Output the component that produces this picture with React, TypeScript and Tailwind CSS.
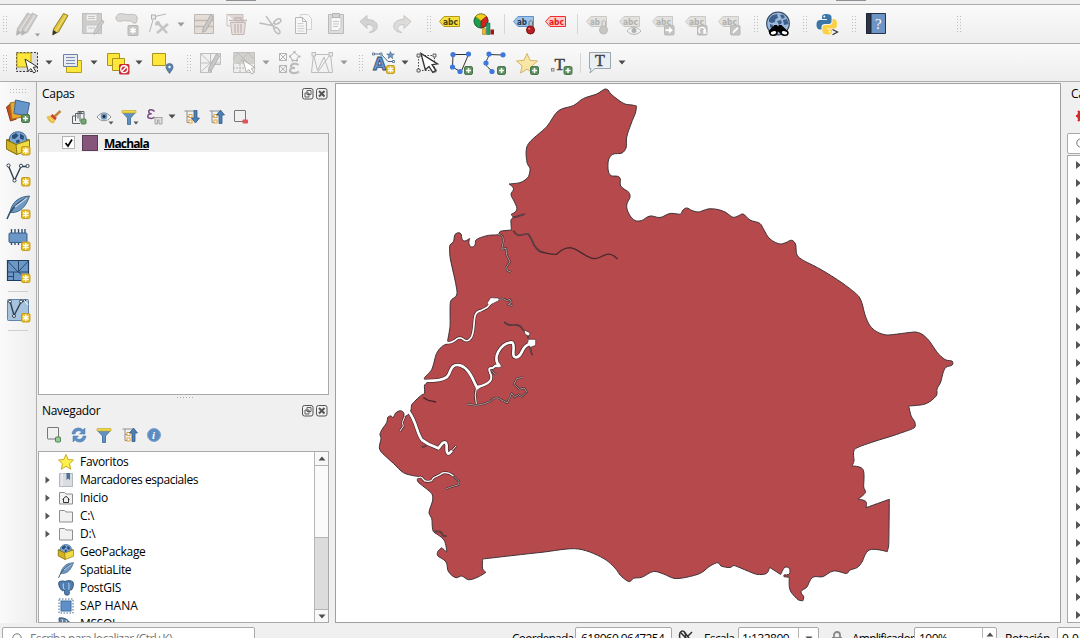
import React from "react";

type P = { className?: string; children?: React.ReactNode };

/* ---------- toolbar primitives ---------- */

const Ico = ({ className = "", children }: P) => (
  <svg viewBox="0 0 24 24" className={"h-6 w-6 shrink-0 overflow-visible " + className} fill="none">
    {children}
  </svg>
);

const Grip = ({ className = "" }: P) => (
  <svg viewBox="0 0 6 18" className={"h-[18px] w-[6px] shrink-0 " + className}>
    {[0, 3, 6, 9, 12, 15].map((y) => (
      <g key={y} fill="#bdbdbd">
        <rect x="1" y={y + 1} width="1" height="1" />
        <rect x="4" y={y + 1} width="1" height="1" />
      </g>
    ))}
  </svg>
);

const Sep = ({ className = "" }: P) => <div className={"h-5 w-[2px] shrink-0 border-l border-[#d6d6d6] " + className} />;

const Drop = ({ className = "", dim = false }: P & { dim?: boolean }) => (
  <svg viewBox="0 0 8 5" className={"h-[5px] w-2 shrink-0 " + className}>
    <path d="M.5 .5h7L4 4.5z" fill={dim ? "#9a9a9a" : "#4d4d4d"} />
  </svg>
);

/* ---------- shared glyph parts ---------- */

const NewBadge = ({ x, y, s = 1 }: { x: number; y: number; s?: number }) => (
  <g transform={`translate(${x} ${y}) scale(${s})`}>
    <rect x=".5" y=".5" width="8.5" height="8.5" rx="1.5" fill="#e5bd2c" stroke="#c39d22" />
    <path d="M4.75 1.5v6.5M2 3.2l5.500 3.200M7.500 3.2L2 6.4" stroke="#fff" strokeWidth="1.400" />
  </g>
);

const PlusBadge = ({ x, y, s = 1 }: { x: number; y: number; s?: number }) => (
  <g transform={`translate(${x} ${y}) scale(${s})`}>
    <rect x=".5" y=".5" width="8" height="8" rx="1.5" fill="#5f9160" stroke="#4a774a" />
    <path d="M4.5 2v5M2 4.5h5" stroke="#fff" strokeWidth="1.5" />
  </g>
);

const Cursor = ({ x, y, stroke = "#333", s = 1 }: { x: number; y: number; stroke?: string; s?: number }) => (
  <path
    transform={`translate(${x} ${y}) scale(${s})`}
    d="M0 0l3.2 12 2.7-2.4 2.8 4.4 2.2-1.4L8.2 8.3l4-.6z"
    fill="#fff"
    stroke={stroke}
    strokeWidth="1"
  />
);

const Tag = ({ fill, stroke, color, text = "abc" }: { fill: string; stroke: string; color: string; text?: string }) => (
  <g>
    <path d="M1.5 9.500L6 4.500h15.500v10H6z" fill={fill} stroke={stroke} strokeLinejoin="round" />
    <text x="5" y="12.600" fontSize="9" fontWeight="700" fontFamily="'DejaVu Sans', sans-serif" fill={color} letterSpacing="0" textLength={text.length > 2 ? 15 : 10} lengthAdjust="spacingAndGlyphs">
      {text}
    </text>
  </g>
);

const DimTag = ({ text }: { text?: string }) => <Tag fill="#e3e2df" stroke="#cbcac7" color="#b0b0b0" text={text} />;

const Pencil = ({ fill, stroke, tip, dx = 0 }: { fill: string; stroke: string; tip: string; dx?: number }) => (
  <g transform={`translate(${dx} 0)`}>
    <path d="M15.500 1.500l4.500 2L10.500 20 5 22.500l.5-5.500z" fill={fill} stroke={stroke} />
    <path d="M18 3L8 19" stroke="#fff" strokeOpacity=".45" />
    <path d="M4.400 23.600l.6-5.600 4 2.600z" fill={tip} />
  </g>
);

const Scribe = () => <path d="M18.500 3l3 2-7.500 13.500-3.500 2 .5-4z" fill="#cac8c6" stroke="#b2b0ae" />;

const Funnel = () => (
  <g>
    <path d="M1.500 3.500h13L9.500 9v6.500h-3V9z" fill="#6290bd" stroke="#4d7aa8" />
    <path d="M1 1.500h14v2.500H1z" fill="#f3d83d" stroke="#b5a33c" strokeWidth=".6" />
  </g>
);

const Tree = ({ up = false }: { up?: boolean }) => (
  <g>
    <path d="M.5 2h10M3 2v11.500h3M3 7.500h3" stroke="#8a8f96" />
    <rect x="5" y="5.500" width="3" height="3" fill="#fff" stroke="#e4a23a" />
    <rect x="5" y="11" width="3" height="3" fill="#fff" stroke="#e4a23a" />
    {up ? (
      <path d="M11.500 1l4 5h-2.500v8.500h-3V6H7.500z" fill="#4d7fb5" stroke="#315b8b" strokeWidth=".8" />
    ) : (
      <path d="M10 1.500h3V9h2.500l-4 5-4-5H10z" fill="#4d7fb5" stroke="#315b8b" strokeWidth=".8" />
    )}
  </g>
);

const GeoBox = () => (
  <g>
    <path d="M.5 9L12 5.500 23.500 9 10 14z" fill="#a98c18" stroke="#8a7413" />
    <path d="M3.500 10.500C2.500 4 7 .8 12 .8S21.500 4 20 10.500L10 14z" fill="#7ba6d4" stroke="#3d6690" />
    <path d="M6 4.500l4-2.500 2.500 2.500L9 8 6 7.500zM14 2.500l4 2.500-.5 4-3.500-1.500zM10 9.500l3-1 1 2.500-3.500 1.500z" fill="#2c4f78" />
    <path d="M.5 9L10 13.500 23.500 9v9.500L11 23.500.5 18z" fill="#f2dc45" stroke="#8a7413" />
    <path d="M.5 9L10 13.500l1 10L.5 18z" fill="#d3b322" stroke="#8a7413" />
  </g>
);

const Feather = () => (
  <g>
    <path d="M23.500 1C14 1.500 6 6 4 17.500c8 .5 15-3 19.500-16.500z" fill="#6f99c4" stroke="#3f6384" />
    <path d="M1 24C4 15 10 8 21 3" stroke="#2f4f68" strokeWidth="1.500" />
    <path d="M9 12L21 3" stroke="#cfdfee" strokeWidth="1.200" />
  </g>
);

const Sm = ({ className = "", children }: P) => (
  <svg viewBox="0 0 16 16" className={"h-4 w-4 shrink-0 overflow-visible " + className} fill="none">
    {children}
  </svg>
);

/* ---------- toolbars ---------- */

const ToolbarTop = () => (
  <div className="flex h-[39px] shrink-0 items-center border-b border-[#adadad] bg-linear-to-b from-[#fafafa] to-[#eeeeee]">
    <Grip className="ml-[2px]" />
    <Ico className="ml-[7px]">
      <g strokeWidth="1.400">
        <Pencil dx={-3} fill="#cfccca" stroke="#c3c0be" tip="#b5b2b0" />
        <Pencil dx={2} fill="#cfccca" stroke="#c3c0be" tip="#b5b2b0" />
      </g>
      <path d="M20 21.500h5l-2.500 3z" fill="#999" />
    </Ico>
    <Ico className="ml-[9px]"><Pencil fill="#dfc63a" stroke="#8f7f24" tip="#333" /></Ico>
    <Ico className="ml-2">
      <path d="M2.500 1.500h19v20h-19z" fill="#cfcdcc" stroke="#bfbdbc" />
      <path d="M6 2h11v7H6zM6 13h12v8H6z" fill="#efefef" stroke="#c6c4c3" />
      <path d="M8 4.500h7M8 6.500h7M8 16h7" stroke="#c4c4c4" />
      <path d="M22 8l2 1.500-7 11-3 2 .5-4z" fill="#cfcdcb" stroke="#b8b6b4" />
    </Ico>
    <Ico className="ml-[11px]">
      <path d="M1 6c0-4 5-5 8-4 4 1.500 12-1.500 13 3 .5 2 0 4-1 6h-3c0-2-2-2-4-2-3 0-4-1-7 0s-6 0-6-3z" fill="#dad8d6" stroke="#c0bebc" />
      <rect x="13" y="13.500" width="10" height="10" rx="1" fill="#c9c8c7" stroke="#b8b7b6" />
      <path d="M18 15.500v6M15.300 17l5.400 3M20.700 17l-5.400 3" stroke="#fff" strokeWidth="1.600" />
    </Ico>
    <Ico className="ml-[9px]">
      <path d="M7 4.500L18 2M5 8L1.500 20" stroke="#b5b5b5" />
      <rect x="3.500" y="3" width="4" height="4" fill="#eee" stroke="#b0b0b0" />
      <path d="M10 11l9 10M20 12L9 21" stroke="#c6c4c2" strokeWidth="2.600" />
      <path d="M7 12c0-2.500 3-4 5-2l-2 3-2 1z" fill="#c4c2c0" />
    </Ico>
    <Drop dim className="ml-[5px]" />
    <Ico className="ml-[7px]">
      <path d="M2.500 2.500h19v19h-19z" fill="#e3dcd7" stroke="#bfb9b4" />
      <path d="M2 8.500h20M2 14.500h20" stroke="#bfb9b4" strokeWidth="1.500" />
      <Scribe />
    </Ico>
    <Ico className="ml-2">
      <path d="M3 2.500h16v13" stroke="#cabebc" fill="#e0d7d5" />
      <path d="M3 2v12h3" stroke="#cabebc" />
      <path d="M6.500 10.500h15l-1.500 12h-12z" fill="#e8dedc" stroke="#c3b6b4" />
      <path d="M5 8.500h18M11 12v9M14 12v9M17 12v9M11 8V6h6v2" stroke="#c3b6b4" strokeWidth="1.300" />
    </Ico>
    <Ico className="ml-[10px]">
      <path d="M1.500 11l15 3M8 4l9 13" stroke="#bdbdbd" strokeWidth="1.400" />
      <ellipse cx="19.500" cy="9.500" rx="3.800" ry="2" transform="rotate(-30 19.500 9.500)" stroke="#bdbdbd" strokeWidth="1.500" />
      <ellipse cx="19" cy="18.500" rx="3.800" ry="2" transform="rotate(50 19 18.500)" stroke="#bdbdbd" strokeWidth="1.500" />
      <path d="M12 13.500l5-3" stroke="#bdbdbd" />
    </Ico>
    <Ico className="ml-[9px]">
      <path d="M9.500 2.500h7l4 4v11h-11z" fill="#f7f7f7" stroke="#d2d2d2" />
      <path d="M4.500 5.500h7l4 4v12h-11z" fill="#f7f7f7" stroke="#b8b8b8" />
      <path d="M11.500 5.500v4h4" stroke="#b8b8b8" />
      <path d="M6.500 11.500h6M6.500 14h7M6.500 16.500h7M6.500 19h7" stroke="#d0d0d0" />
    </Ico>
    <Ico className="ml-[9px]">
      <path d="M4.500 2.500h15v19h-15z" fill="#dcdcdc" stroke="#bababa" />
      <path d="M7 5.500h10v10l-3 3H7z" fill="#f8f8f8" stroke="#c6c6c6" />
      <path d="M8.500 1.500h7v4h-7z" fill="#d2d2d2" stroke="#b5b5b5" />
      <path d="M9 9.500h6M9 12h6M9 14.500h5" stroke="#c8c8c8" />
    </Ico>
    <Ico className="ml-[9px]">
      <path d="M3 9.500l7-6v4c7 0 11 3 10 8-1 4-5 5-8 5 3-1 5-3 4-5.500-.8-2-3-2.500-6-2.500v4z" fill="#d4d3d2" stroke="#c6c5c4" />
    </Ico>
    <Ico className="ml-[9px]">
      <path d="M21 9.500l-7-6v4c-7 0-11 3-10 8 1 4 5 5 8 5-3-1-5-3-4-5.500.8-2 3-2.500 6-2.500v4z" fill="#dddcdb" stroke="#c6c5c4" />
    </Ico>
    <Grip className="ml-[12px]" />
    <Ico className="ml-[6px]"><Tag fill="#f7e03c" stroke="#b09a20" color="#4a4310" /></Ico>
    <Ico className="ml-[10px]">
      <circle cx="9" cy="9" r="7" fill="#18a04a" stroke="#145a2a" />
      <path d="M9 9L3.500 4.500C6 1 12 1 14.500 4.500z" fill="#f6cf1c" stroke="#94790f" strokeWidth=".6" />
      <path d="M9 9l5.500-4.500c3 4 1 10-5.500 11.500z" fill="#d42222" stroke="#701515" strokeWidth=".6" />
      <path d="M10.500 16.500h3v6h-3z" fill="#f6b61c" stroke="#9a6b0d" strokeWidth=".5" />
      <path d="M14.500 11h3.500v11.500h-3.500z" fill="#1ea26a" stroke="#14603f" strokeWidth=".5" />
      <path d="M18.500 17.500H22v5h-3.500z" fill="#a01919" />
    </Ico>
    <Sep className="ml-2" />
    <Ico className="ml-[6px]">
      <Tag fill="#9fc3ea" stroke="#5f92c8" color="#26384c" text="ab" />
      <path d="M17 17V9.500q2-2 3.500 0V17" stroke="#777" />
      <circle cx="18.500" cy="18" r="4" fill="#b81f24" stroke="#7b1215" />
      <circle cx="17.200" cy="16.800" r="1" fill="#e78080" />
    </Ico>
    <Ico className="ml-2"><Tag fill="#ffc9c9" stroke="#ef2b2d" color="#e3181b" /></Ico>
    <Sep className="ml-[9px]" />
    <Ico className="ml-[6px]">
      <DimTag text="ab" />
      <path d="M17 17V9.500q2-2 3.500 0V17" stroke="#b5b5b5" />
      <circle cx="18.500" cy="18" r="4" fill="#c8c6c4" stroke="#bcbab8" />
    </Ico>
    <Ico className="ml-[9px]">
      <DimTag />
      <path d="M9 19c4-5 10-5 14 0-4 4.500-10 4.500-14 0z" fill="#f2f2f2" stroke="#b5b5b5" />
      <circle cx="16" cy="18.500" r="2.500" fill="#b0b0b0" />
    </Ico>
    <Ico className="ml-[9px]">
      <DimTag />
      <rect x="13.500" y="13.500" width="9.500" height="9.500" rx="1" fill="#c5c4c0" stroke="#bab9b5" />
      <path d="M14.500 18.200h5" stroke="#fff" strokeWidth="2" />
      <path d="M18 14.800l3.800 3.400-3.800 3.400z" fill="#fff" />
    </Ico>
    <Ico className="ml-[9px]">
      <DimTag />
      <rect x="13.500" y="13.500" width="9.500" height="9.500" rx="1" fill="#c5c4c0" stroke="#bab9b5" />
      <path d="M16 21a3.200 3.200 0 1 1 4.500-.3M20 17.800v3.200h2.500" stroke="#fff" strokeWidth="1.400" />
    </Ico>
    <Ico className="ml-[9px]">
      <DimTag />
      <rect x="13.500" y="13.500" width="9.500" height="9.500" rx="1" fill="#c5c4c0" stroke="#bab9b5" />
      <path d="M15.500 21.500l1-3 4-3.500 1 1.500-4 4z" fill="#fff" />
    </Ico>
    <Grip className="ml-[12px]" />
    <Ico className="ml-[7px]">
      <circle cx="12" cy="11.500" r="11.300" fill="#9db9da" stroke="#3a4d66" strokeWidth="1.200" />
      <path d="M3 7l3-3.500L11 2l1 4-2.500 1L9 10l-3 1-3-1zM14 3l3-.5 2 3-3 1.500zM17 8l4-1 1.500 5L18 13zM4 12l3 1v4l-3-2zM11 9l4-1 1 3-3 2z" fill="#3d5f8c" />
      <path d="M8.500 13H11l1 1.500 1-1.500h2.500l6 6-1 3h-5.500l-3-2.500-3 2.500H3.500l-1-3z" fill="#000" />
      <ellipse cx="7.500" cy="20.800" rx="3.500" ry="2.400" fill="#fff" stroke="#000" strokeWidth="1.500" transform="rotate(-12 7.500 20.800)" />
      <ellipse cx="18.500" cy="20.800" rx="3.500" ry="2.400" fill="#fff" stroke="#000" strokeWidth="1.500" transform="rotate(12 18.500 20.800)" />
    </Ico>
    <Grip className="ml-[12px]" />
    <Ico className="ml-[7px]">
      <path d="M11.500 2c-4 0-4.500 1.500-4.500 3v2h5v1H5c-3 0-3.500 3-3.500 5 0 3 1.500 4.500 3.500 4.500h1.500V15c0-2 1.500-3 3-3H14c1.500 0 2.500-1 2.500-2.500V5c0-2-2-3-5-3z" fill="#3b76a8" />
      <path d="M12.500 22.500c4 0 4.500-1.500 4.500-3v-2h-5v-1h7c3 0 3-3 3-5s-1-4.500-3-4.500h-1.500V10c0 2-1.500 3-3 3H10c-1.500 0-2.500 1-2.500 2.500V19.500c0 2 2 3 5 3z" fill="#fbd043" />
      <circle cx="9.300" cy="4.600" r="1" fill="#fff" />
      <circle cx="14.700" cy="19.700" r="1" fill="#fff" />
      <path d="M17.500 17.500l5 2.500-5 2.800" stroke="#333" strokeWidth="1.300" />
    </Ico>
    <Grip className="ml-[12px]" />
    <Ico className="ml-[7px]">
      <path d="M2.500 1.500h19v20h-19z" fill="#6c94c4" stroke="#2a3444" />
      <path d="M2.500 1.500H7v20H2.500z" fill="#2a3548" stroke="#1d2533" />
      <text x="11" y="17" fontSize="15" fontFamily="'Liberation Serif', serif" fill="#fff">?</text>
    </Ico>
    <Grip className="ml-[68px]" />
  </div>
);

const ToolbarBottom = () => (
  <div className="flex h-[38px] shrink-0 items-center border-b border-[#adadad] bg-linear-to-b from-[#fafafa] to-[#eeeeee]">
    <Grip className="ml-[2px]" />
    <Ico className="ml-[7px]">
      <path d="M1.500 1.500h21v19h-21z" fill="#ddd" stroke="#333" strokeDasharray="2 1.500" />
      <path d="M2 2h14v14H2z" fill="#ffe63b" stroke="#b59f1c" />
      <Cursor x={10} y={8} />
    </Ico>
    <Drop className="ml-[6px]" />
    <Ico className="ml-2">
      <path d="M5.500 9.500h15v12h-15z" fill="#ffe63b" stroke="#b59f1c" />
      <path d="M2.500 3.500h14v12h-14z" fill="#e8ecf5" stroke="#6f7ea4" />
      <path d="M5 6.500h9M5 9.500h9M5 12.500h9" stroke="#7d8cae" />
    </Ico>
    <Drop className="ml-[5px]" />
    <Ico className="ml-2">
      <path d="M1.500 2.500h12v12h-12z" fill="#ffe63b" stroke="#a8931c" />
      <path d="M6.500 7.500h12v12h-12z" fill="#ffe63b" stroke="#a8931c" />
      <rect x="13" y="13" width="10.500" height="10.500" rx="1.500" fill="#cf2c33" />
      <circle cx="18.200" cy="18.200" r="3.400" stroke="#fff" strokeWidth="1.400" />
      <path d="M15.800 20.600l4.800-4.800" stroke="#fff" strokeWidth="1.400" />
    </Ico>
    <Drop className="ml-[5px]" />
    <Ico className="ml-[7px]">
      <path d="M2.500 2.500h13v12h-13z" fill="#ffe63b" stroke="#a8931c" />
      <path d="M19.500 22.500c-2-3-3.500-4.500-3.500-6.500a3.500 3.500 0 0 1 7 0c0 2-1.500 3.500-3.500 6.500z" fill="#5b83ad" stroke="#3f6284" strokeWidth=".7" />
      <circle cx="19.500" cy="16" r="1.200" fill="#fff" />
    </Ico>
    <Grip className="ml-[12px]" />
    <Ico className="ml-[6px]">
      <path d="M2.500 2.500h20v11h-9v8h-11z" fill="#f0f0f0" stroke="#bfbfbf" />
      <path d="M2.500 12h20M12.500 2.500V21M2.500 2.500l10 9.500M12.500 12l10-9.500M2.500 21l10-9" stroke="#bfbfbf" />
      <Scribe />
    </Ico>
    <Ico className="ml-[10px]">
      <path d="M1.500 1.500h21v20h-21z" fill="#efeeed" stroke="#c3c1bf" />
      <path d="M1 2h21v11H1z" fill="#d2d0cd" />
      <path d="M1 17h12M8 13v8M1 8l5-6 5 5 5-5 6 6M6 13l5-6 6 6" stroke="#b8b6b3" strokeDasharray="2 1" />
      <Cursor x={11} y={9} stroke="#b0b0b0" />
    </Ico>
    <Drop dim className="ml-[6px]" />
    <Ico className="ml-[7px]">
      <path d="M2.500 2.500h7v7h-7zM2.500 14.500h7v7h-7zM2.500 2.500l7 7m0-7l-7 7M2.500 14.500l7 7m0-7l-7 7" stroke="#b5b5b5" />
      <path d="M17.500 1.500l4 3.500-2 4.500h-4L13 5z" stroke="#b5b5b5" />
      <path d="M16.500 0h2v2h-2zM12 4.500h2v2h-2zM21.500 4.500h2v2h-2zM14.500 8.500h2v2h-2zM19 8.500h2v2h-2z" fill="#b5b5b5" />
      <path d="M21.500 14c-3-2.500-8-1-7.500 1.200.3 1.500 2 1.800 4 1.800-3 0-5 .8-5 2.500 0 3 6 3.500 9 1" stroke="#bbb" strokeWidth="2.200" />
    </Ico>
    <Ico className="ml-[9px]">
      <path d="M3.500 3.500h17M3.500 3.500l-2 18h21l-2-18M3.500 3.500l4 16L14 6l5 15.500M20.500 3.500L14 12l-6.500 9.500" stroke="#bcbcbc" />
      <rect x="2" y="1.500" width="3.500" height="3.500" fill="#eee" stroke="#bcbcbc" />
      <rect x="19" y="1.500" width="3.500" height="3.500" fill="#eee" stroke="#bcbcbc" />
    </Ico>
    <Drop dim className="ml-[6px]" />
    <Grip className="ml-[10px]" />
    <Ico className="ml-2">
      <path d="M1.500 3H9l7 7.500h5.500" stroke="#4a6687" />
      <path d="M.5 2h2v2h-2zM8 2h2v2H8zM20.500 9.500h2v2h-2z" fill="#fff" stroke="#4a6687" strokeWidth=".8" />
      <path d="M18.500.5l1 2.500h2.800l-2.200 1.700.8 2.800-2.400-1.600-2.400 1.600.8-2.800L14.700 3h2.800z" fill="#7097c2" stroke="#48698f" strokeWidth=".6" />
      <text x="1" y="19" fontSize="17" fontWeight="700" fontFamily="'DejaVu Sans', sans-serif" fill="#6c95c7" stroke="#2d4f7a" strokeWidth=".8">A</text>
      <NewBadge x={14} y={14} s={0.95} />
    </Ico>
    <Drop className="ml-[5px]" />
    <Ico className="ml-[6px]">
      <path d="M3.500 4.500h16v15h-16z" stroke="#444" strokeDasharray="1.500 1.500" />
      <path d="M2 3h3v3H2zM18 3h3v3h-3zM2 18h3v3H2zM18 18h3v3h-3z" fill="#eee" stroke="#444" strokeWidth=".8" />
      <Cursor x={6} y={2.500} s={1.350} />
    </Ico>
    <Ico className="ml-[10px]">
      <path d="M4 3.500h15.500L12 21l-8.500-5z" stroke="#333" />
      <g fill="#3f78dd"><circle cx="4" cy="3.500" r="2.600" /><circle cx="19.500" cy="3" r="2.600" /><circle cx="3.500" cy="16" r="2.600" /><circle cx="11" cy="20.500" r="2.600" /></g>
      <PlusBadge x={15} y={15} />
    </Ico>
    <Ico className="ml-[10px]">
      <path d="M20 4L6 3.500C6 6 3 9 3 12c0 4 3 5 6.500 8.500" stroke="#333" />
      <g fill="#3f78dd"><circle cx="6" cy="3" r="2.600" /><circle cx="20" cy="3.800" r="2.600" /><circle cx="3" cy="12" r="2.600" /><circle cx="9" cy="20.500" r="2.600" /></g>
      <PlusBadge x={14} y={15} />
    </Ico>
    <Ico className="ml-[9px]">
      <path d="M11 2.500l3 6.800 7.500.7-5.700 5 1.700 7-6.500-3.800L4.500 22l1.700-7-5.700-5 7.500-.7z" fill="#fae7a8" stroke="#d2b463" />
      <PlusBadge x={14} y={15} />
    </Ico>
    <Ico className="ml-[10px]">
      <text x="4.500" y="19" fontSize="17" fontFamily="'Liberation Serif', serif" fill="#444" stroke="#444" strokeWidth=".5">T</text>
      <rect x="1.500" y="17.500" width="2.500" height="2.500" fill="#ddd" stroke="#888" />
      <PlusBadge x={13.500} y={15} />
    </Ico>
    <Sep className="ml-[6px]" />
    <Ico className="ml-[6px]">
      <path d="M1.500 1.500h21v16H7L2 22l1-4.500H1.500z" fill="#e8f0f5" stroke="#9aa5ac" />
      <text x="7" y="14.500" fontSize="16" fontFamily="'Liberation Serif', serif" fill="#444" stroke="#444" strokeWidth=".5">T</text>
    </Ico>
    <Drop className="ml-[6px]" />
  </div>
);

/* ---------- left side bar ---------- */

const SideBar = () => (
  <div className="flex w-9 shrink-0 flex-col items-center bg-linear-to-r from-[#fafafa] to-[#eeeeee]">
    <svg viewBox="0 0 18 6" className="mt-[6px] h-[6px] w-[18px] shrink-0" fill="#bdbdbd">
      {[0, 3, 6, 9, 12, 15].map((x) => (
        <path key={x} d={`M${x + 1} 1h1v1h-1zM${x + 1} 4h1v1h-1z`} />
      ))}
    </svg>
    <Ico className="mt-[5px]">
      <path d="M.5 8l5-4 5 16-6 2z" fill="#c4501c" stroke="#90380f" />
      <path d="M4 4l10-2 3 16-11 2z" fill="#e8a92c" stroke="#a9751a" />
      <path d="M9.500 1l14 3-2.500 13-13-2.500z" fill="#6896c8" stroke="#3f6897" />
      <PlusBadge x={15} y={15} />
    </Ico>
    <Ico className="mt-2"><GeoBox /><NewBadge x={15} y={15} /></Ico>
    <Ico className="mt-2">
      <path d="M2.500 3l6 14.500L15 3.500h6" stroke="#30404f" strokeWidth="1.400" />
      <g fill="#fff" stroke="#30404f"><circle cx="2.500" cy="2.500" r="1.600" /><circle cx="8.500" cy="17.500" r="1.600" /><circle cx="15" cy="2.800" r="1.600" /><circle cx="21.500" cy="3" r="1.600" /></g>
      <NewBadge x={15} y={14} />
    </Ico>
    <Ico className="mt-2"><Feather /><NewBadge x={15} y={14.500} /></Ico>
    <Ico className="mt-2">
      <path d="M5.500 2v16M9 2v16M12.500 2v16M16 2v16M19 2v14" stroke="#34506f" strokeWidth="1.400" />
      <rect x="3" y="6" width="18" height="9.500" rx="1" fill="#6a96c8" stroke="#3b5f88" />
      <NewBadge x={15} y={14.500} />
    </Ico>
    <Ico className="mt-2">
      <path d="M1.500 1.500h21v20h-21z" fill="#6c98c8" stroke="#1f3d5f" strokeWidth="1.200" />
      <path d="M1.500 13h21M12.500 1.500v12M7.500 13v8.500M1.500 2L12 13 22.500 2M1.500 17.500H7M13 13l3 4" stroke="#28496e" />
      <NewBadge x={15} y={14.500} />
    </Ico>
    <div className="mt-2 h-px w-[20px] shrink-0 bg-[#cfcfcf]" />
    <Ico className="mt-[6px]">
      <rect x="1.500" y="1.500" width="21" height="21" rx="1" fill="#a8c3de" stroke="#6284a6" />
      <path d="M4 3l4 14.500L15 4l5-2" stroke="#30404f" strokeWidth="1.400" />
      <g fill="#fff" stroke="#30404f"><circle cx="4" cy="3.500" r="1.500" /><circle cx="8" cy="18" r="1.500" /><circle cx="15" cy="3.500" r="1.500" /></g>
      <path d="M18 2l4 5" stroke="#fff" />
      <NewBadge x={15} y={15} />
    </Ico>
    <div className="mt-2 h-px w-[20px] shrink-0 bg-[#cfcfcf]" />
  </div>
);

/* ---------- dock panels ---------- */

const PanelTitle = ({ children }: P) => (
  <div className="flex h-[18px] items-center pr-[1px] pl-1">
    <span className="flex-1">{children}</span>
    <svg viewBox="0 0 26 12" className="h-3 w-[26px]" fill="none" stroke="#555">
      <rect x=".5" y=".5" width="10.500" height="10.500" rx="2" />
      <path d="M5 2.500h4v4H5zM3 5h4v4H3z" strokeWidth=".9" fill="#f0f0f0" />
      <rect x="14.500" y=".5" width="10.500" height="10.500" rx="2" />
      <path d="M17 3l5.500 5.500M22.500 3L17 8.500" strokeWidth="2" />
    </svg>
  </div>
);

const LayerTools = () => (
  <div className="mt-[6px] flex h-4 items-center">
    <Sm className="ml-2">
      <path d="M.5 7.500l4.500-1 5 4-2.500 4C4.500 14.500 1.500 11.500.5 7.500z" fill="#e9c04a" />
      <path d="M3.500 8.500l3.500 3.500" stroke="#f6e3a0" />
      <path d="M5.500 6l4.500 4" stroke="#cf3b2e" strokeWidth="2.600" />
      <path d="M8.500 7.500l6-5.500" stroke="#c0853a" strokeWidth="2.400" />
    </Sm>
    <Sm className="ml-[9px]">
      <path d="M4.500 12V4.500h8M7 9.500v-7h6v8M1.500 14.500V7h4M1.500 14.500H9M9 12.500V2" stroke="#59636a" />
      <path d="M8 4.500l1.500-2L11 4.500" stroke="#59636a" />
      <rect x="10" y="10" width="5" height="5" rx="1" fill="#73a873" stroke="#4e854e" />
    </Sm>
    <Sm className="ml-[9px]">
      <path d="M1 8c4-5.500 10-5.500 14 0-4 5-10 5-14 0z" fill="#f4f4f4" stroke="#8a9199" />
      <circle cx="8" cy="7.500" r="3.300" fill="#6d95bd" />
      <circle cx="8" cy="7.500" r="1.400" fill="#223" />
      <path d="M12.500 12.500h5l-2.500 3z" fill="#555" />
    </Sm>
    <Sm className="ml-[9px]"><Funnel /><path d="M12.500 12.500h5l-2.500 3z" fill="#555" /></Sm>
    <Sm className="ml-[10px]">
      <path d="M7.500 2.500C5-.5 1.500.5 1.700 3c.1 1.300 1.500 1.700 3 1.700C2.500 4.700.8 5.500.8 7.200c0 2.500 4.500 3 6.700.8" stroke="#7a4a86" strokeWidth="1.500" />
      <path d="M7.500 8.500h8M8 8v7h2.500v-4h1.500v4H15V8" fill="#ddd" stroke="#a5a5a5" />
    </Sm>
    <Drop className="ml-[5px]" />
    <Sm className="ml-[8px]"><Tree /></Sm>
    <Sm className="ml-[9px]"><Tree up /></Sm>
    <Sm className="ml-2">
      <rect x="1.500" y="1.500" width="11" height="11" rx=".5" stroke="#777" />
      <rect x="9.500" y="10.500" width="5.500" height="4" rx="1" fill="#e25058" />
    </Sm>
  </div>
);

const BrowserTools = () => (
  <div className="mt-[7px] flex h-4 items-center">
    <Sm className="ml-2">
      <rect x="1.500" y=".5" width="11" height="11.500" rx=".5" stroke="#777" />
      <rect x="9.500" y="10" width="5" height="5" rx="1" fill="#9cc79c" stroke="#4e854e" />
    </Sm>
    <Sm className="ml-[9px]">
      <path d="M1 7C1.500 3 4 1 7.500 1c2 0 3.500.8 4.500 2l2-2v6H8.500l2-2C8 2.500 4.500 4 4 7z" fill="#5e8fc5" stroke="#4475a9" strokeWidth=".5" />
      <path d="M15 9c-.5 4-3 6-6.500 6-2 0-3.500-.8-4.500-2l-2 2V9h5.500l-2 2c2.500 2.500 6 1 6.500-2z" fill="#5e8fc5" stroke="#4475a9" strokeWidth=".5" />
    </Sm>
    <Sm className="ml-[9px]"><Funnel /></Sm>
    <Sm className="ml-[10px]"><Tree up /></Sm>
    <Sm className="ml-2">
      <circle cx="8" cy="8" r="6.500" fill="#5c8bc0" stroke="#7fa6d1" />
      <text x="6" y="12" fontSize="11" fontWeight="700" fontStyle="italic" fontFamily="'Liberation Serif', serif" fill="#fff">i</text>
    </Sm>
  </div>
);

const Folder = ({ home = false }: { home?: boolean }) => (
  <g>
    <path d="M1.500 2.500h5l1.500 1.500h6.500v10h-13z" fill="#f1f1f1" stroke="#8f8f8f" />
    {home && <path d="M4.500 9.500L8 6.300 11.500 9.500M5.500 9v3.500h5V9" stroke="#333" />}
  </g>
);

const browserItems: { label: string; arrow?: boolean; cls?: string; icon: React.ReactNode }[] = [
  { label: "Favoritos", icon: <path d="M8 .5l2.200 5 5.300.5-4 3.700 1.200 5.500L8 12.300l-4.700 2.900 1.200-5.500-4-3.700L5.800 5.500z" fill="#fff04a" stroke="#c4a929" /> },
  {
    label: "Marcadores espaciales", arrow: true, cls: "tracking-[-0.44px]",
    icon: <g><path d="M1.500 1.500h13v13h-13z" fill="#d9dde1" stroke="#b4b8bc" /><path d="M4 1v13" stroke="#f5f5f5" /><path d="M8.500 1h3.500v7l-1.800-1.500L8.500 8z" fill="#4a709b" /></g>,
  },
  { label: "Inicio", arrow: true, icon: <Folder home /> },
  { label: "C:\\", arrow: true, icon: <Folder /> },
  { label: "D:\\", arrow: true, icon: <Folder /> },
  { label: "GeoPackage", icon: <g transform="scale(.66)"><GeoBox /></g> },
  { label: "SpatiaLite", cls: "tracking-[-0.37px]", icon: <g transform="scale(.66)"><Feather /></g> },
  {
    label: "PostGIS",
    icon: <g><path d="M1 2c2-1.500 5-1 6-.5C9 .5 13 0 15 2c1 2 0 6-1.500 8H11c.5 2 .5 4-.5 5H7.500c-1-1-1-3-1-5-1 1-2.500 1-3 0C1.500 8 0 4 1 2z" fill="#4f7fb2" stroke="#35597f" /><path d="M5.500 3.500C5 6 5 8 6.500 9.500M10.500 3c1 2 0 5 .5 7" stroke="#c5d7ea" /></g>,
  },
  { label: "SAP HANA", cls: "tracking-[0.05px]", icon: <g><rect x="3" y="3" width="10" height="10" fill="#5f90c9" stroke="#3f6d9f" /><path d="M1 1h14v14H1z" stroke="#44688f" strokeDasharray="1.500 1.500" /></g> },
  { label: "MSSQL", icon: <g><path d="M1 2c7-1 12 3 14 13H9C7 11 1 14 1 2z" fill="#5b7ea3" stroke="#3c5975" /><path d="M4 3c1 3 1 6 0 8M8 4c1 3 1 6 0 8" stroke="#dfe8f0" /></g> },
];

const Dock = () => (
  <div className="flex w-[293px] shrink-0 flex-col border-l border-[#adadad] pl-px">
    <div className="h-[3px] shrink-0" />
    <PanelTitle>Capas</PanelTitle>
    <LayerTools />
    <div className="mt-2 flex h-[262px] shrink-0 flex-col border border-[#a9a9a9] bg-white">
      <div className="flex h-[18px] items-center bg-[#f0f0f0] pl-[23px]">
        <div className="flex h-[13px] w-[13px] items-center justify-center border border-[#b5b5b5] bg-white">
          <svg viewBox="0 0 10 10" className="h-[10px] w-[10px]" fill="none"><path d="M1.500 5l2.500 3L8 1.500" stroke="#000" strokeWidth="1.700" /></svg>
        </div>
        <div className="ml-[7px] h-4 w-4 border border-[#5b3a58] bg-[#85567a]" />
        <span className="mt-[2px] ml-[6px] font-bold tracking-[-0.85px] underline">Machala</span>
      </div>
    </div>
    <svg viewBox="0 0 18 8" className="ml-[138px] h-2 w-[18px] shrink-0" fill="#aaa">
      {[0, 3, 6, 9, 12, 15].map((x) => <rect key={x} x={x + 1} y="2" width="1" height="1" />)}
    </svg>
    <PanelTitle>Navegador</PanelTitle>
    <BrowserTools />
    <div className="mt-2 flex h-[172px] shrink-0 overflow-hidden border border-[#a9a9a9] bg-white">
      <div className="flex-1 pt-[1px]">
        {browserItems.map((it) => (
          <div key={it.label} className="flex h-[18px] items-center">
            <svg viewBox="0 0 5 8" className="ml-[6px] h-2 w-[5px]">{it.arrow && <path d="M.5 .5v7L4.800 4z" fill="#555" />}</svg>
            <Sm className="ml-[8px]">{it.icon}</Sm>
            <span className={"ml-[6px] whitespace-pre " + (it.cls ?? "")}>{it.label}</span>
          </div>
        ))}
      </div>
      <div className="flex w-[14px] flex-col border-l border-[#b5b5b5] bg-[#dcdcdc]">
        <div className="flex h-[14px] items-center justify-center border-b border-[#b5b5b5] bg-[#f8f8f8]"><Drop className="rotate-180" /></div>
        <div className="h-[72px] border-b border-[#b5b5b5] bg-[#fafafa]" />
        <div className="flex-1" />
        <div className="flex h-[13px] items-center justify-center border-t border-[#b5b5b5] bg-[#f8f8f8]"><Drop /></div>
      </div>
    </div>
  </div>
);

/* ---------- map ---------- */

const OUTLINE =
  "605 89L608 90L610 93L617 99L625 104L632 105L636.5 106L635.7 112L631 124L626.7 137L626 148L622 153L612.7 154.3L608.5 160L608.3 171L611 175.7L619.5 177.3L620.7 186L629 192.5L630 197.3L626.7 205L629 214L635 220.5L641.7 220.5L650 216L660 217.5L670 213.5L680.5 214L683 210L686.7 208L692 210.5L698.5 212L708 209L716.7 209.3L725 212L733 217.3L738 216L743 214L750 220L760 223.5L764 230L770 239L780 244L786 242.5L791.7 240.3L795.5 244L797 255L802.7 260L820 269L843 283.5L859 296.7L862.5 305L865 315L870 325.7L876.7 331.7L886.7 335L915 332L921.7 334L928.5 340L938.5 354L946 360L952.3 361.3L952.3 365L946 367.3L943 373L940.7 382L937 389L936.7 395L930 401.5L923.5 404.5L908.7 406L911.5 417L914.7 421.7L914.7 427.3L898 434L854.7 449.3L854 461L852 466L862.7 469L863.7 487L865.3 492.7L858 499L866 501.7L866 507.7L889.3 499.3L888.7 545L887.3 551.7L869.3 550L862 562L857.3 567.5L850 570L846.7 573.5L833.5 571L822.7 576.7L812.7 577.3L806.7 587.3L801 591.7L803.7 596.7L803 600.7L798.5 600L791 592L789.3 586.7L789.3 577.3L784 576.7L784 575L789.3 574L789.3 568.5L786 567L784 568L780.7 574.5L769.5 567.3L766.7 573.3L756.7 574.3L734 565.5L730 567.5L721 566L718 562.7L710 566L701.7 572.5L692 576L675 578.5L663.5 574L653.5 571.5L641.7 577.3L633.5 578.3L629.3 581.7L620 575L616.7 570L605 559.3L578.5 549L540 552.5L482.7 559L482.7 569L486 572.3L478 577L468.5 579.7L461.7 576L456 577.7L448.5 571.7L446 562L437.7 555.7L437.7 551.7L441.7 547.7L446.7 552L444 540L433.5 531.7L432.3 526.7L431.7 518.5L429 512.7L432.7 500L431.7 493.5L418.5 482.5L417.3 479.5L420 476.7L413.5 475.7L403.5 472.7L393.5 463.5L381 451.7L379.3 447.5L381 438.5L380 434L383 428L386.7 422.7L388 417L391 416L393 418L394.3 415.5L396.7 412L401.7 411L404 414L403 418L406 416L409 414L411 410L411.7 405L416 400L421.7 395L424.5 393.5L424.5 385L427 382.7L424.3 378.5L431.7 369.5L436.5 353.5L441.7 346.7L448.5 342.7L447.7 340.7L450 326.7L450.7 301L456.7 295L455.7 283.5L450 256.7L450 245L453.5 241.5L455 234.5L459 232.7L461 234L462.3 239.5L465 241L469.5 238.5L469 244L471.7 247L475 245L476 240L486.7 235.7L498.5 234.5L500 231.5L511.5 230L511 220L513 217L511 214.5L516.7 210L515 203L511 194.5L513.5 188.5L509 184L520 182.7L525 180L528.5 176.5L530 168.5L527.3 163.5L527.3 145.7L546.7 126.7L558.5 110.7L573.5 105.5L583.5 98.5L596.7 94";

type Pt = [number, number];

/* Rounds gentle bends with cubic segments and leaves sharp corners as they are. */
function smoothRing(src: string): string {
  const pts = src.split("L").map((p) => p.trim().split(" ").map(Number) as Pt);
  const n = pts.length;
  const handles = pts.map((p, i) => {
    const a = pts[(i + n - 1) % n];
    const b = pts[(i + 1) % n];
    const u: Pt = [p[0] - a[0], p[1] - a[1]];
    const v: Pt = [b[0] - p[0], b[1] - p[1]];
    const lu = Math.hypot(u[0], u[1]);
    const lv = Math.hypot(v[0], v[1]);
    const cos = (u[0] * v[0] + u[1] * v[1]) / (lu * lv);
    if (cos < 0.15) return [0, 0] as Pt;
    const t: Pt = [u[0] / lu + v[0] / lv, u[1] / lu + v[1] / lv];
    const k = (0.36 * Math.min(lu, lv)) / Math.hypot(t[0], t[1]);
    return [t[0] * k, t[1] * k] as Pt;
  });
  let d = `M${pts[0][0]} ${pts[0][1]}`;
  for (let i = 0; i < n; i++) {
    const j = (i + 1) % n;
    const c = [pts[i][0] + handles[i][0], pts[i][1] + handles[i][1], pts[j][0] - handles[j][0], pts[j][1] - handles[j][1], pts[j][0], pts[j][1]];
    d += "C" + c.map((x) => x.toFixed(2)).join(" ");
  }
  return d + "Z";
}

const RING = smoothRing(OUTLINE);

type Creek = { d: string; w: number; o: string };
const NORTH = "translate(370 80) scale(.33333)";
const MID = "translate(370 270) scale(.33333)";
const SOUTH = "translate(370 390) scale(.33333)";

const creeks: Creek[] = [
  { o: NORTH, w: 1, d: "M430 452Q440 470 455 465T475 463Q484 475 490 490T515 517" },
  { o: NORTH, w: 0, d: "M505 512Q530 523 560 523Q580 503 600 503C625 505 650 537 675 536S710 505 743 537" },
  { o: NORTH, w: 2, d: "M385 463Q402 465 400 485L395 508L408 505L410 525L420 545L410 560L412 572L425 577" },
  { o: NORTH, w: 1, d: "M426 413L440 410L465 402" },
  { o: MID, w: 5, d: "M228 219Q245 219 255 211Q268 198 280 208T302 205C314 190 310 160 315 138Q318 124 335 121L352 112L365 96L385 88" },
  { o: MID, w: 2, d: "M385 88Q400 83 412 92L420 88L424 98L415 103L428 108" },
  { o: MID, w: 8, d: "M155 333L190 332Q230 330 237 312C245 290 250 282 270 286C300 296 308 330 321 352" },
  { o: MID, w: 6, d: "M321 352Q350 345 360 333Q368 322 360 308Q352 292 368 294L378 286" },
  { o: MID, w: 8, d: "M388 287Q372 270 385 245Q400 218 425 217C440 222 420 262 438 262C460 260 450 232 478 222" },
  { o: MID, w: 2, d: "M365 300L372 310L380 314" },
  { o: MID, w: 3, d: "M320 350Q312 375 319 402" },
  { o: MID, w: 2, d: "M290 402L320 406L340 402L360 395Q375 378 388 386T412 399L425 370L434 382L445 374L455 380L470 366L463 354L448 358L432 343L440 326L458 322" },
  { o: MID, w: 1, d: "M403 155Q410 168 430 165T457 177L470 190L476 205" },
  { o: MID, w: 1, d: "M480 230L483 245L487 256" },
  { o: MID, w: 0, d: "M160 383L175 391L198 396" },
  { o: SOUTH, w: 8, d: "M116 64C140 95 140 130 156 150L175 162L205 175L217 160Q228 152 230 166Q228 195 238 190L246 182" },
  { o: SOUTH, w: 3, d: "M246 182L258 168" },
  { o: SOUTH, w: 1, d: "M155 172L170 167" },
  { o: SOUTH, w: 4, d: "M145 263Q155 258 160 268T185 272C190 255 205 262 217 249Q235 245 250 258" },
  { o: SOUTH, w: 2, d: "M250 258L268 275L264 285L245 290L228 297" },
  { o: SOUTH, w: 3, d: "M104 80L97 98L100 108L90 123" },
  { o: SOUTH, w: 1, d: "M193 424L212 425L220 437L230 439" },
];

const MapCanvas = () => (
  <div className="mt-px ml-[6px] flex w-[726px] shrink-0 border border-[#a0a0a0] bg-white">
    <svg viewBox="336 84 724 538" className="h-[538px] w-[724px]" fill="none">
      <clipPath id="land"><path d={RING} /></clipPath>
      <path d={RING} fill="#b6494c" stroke="#3d3236" strokeWidth="1" strokeLinejoin="round" />
      <g strokeLinejoin="round" strokeLinecap="butt">
        <g clipPath="url(#land)">
          {creeks.map((c, i) => <path key={i} d={c.d} transform={c.o} stroke="#45292d" strokeWidth={c.w + 4} />)}
        </g>
        <g transform={MID} stroke="#45292d" strokeWidth="2" fill="#fff">
          <path d="M352 98L362 83L385 84L386 92L362 104L352 104z" />
          <path d="M475 208L497 208L497 226L482 232L472 222z" />
          <path d="M462 180L480 188L478 198L466 194z" />
          <path d="M366 292L386 277L396 290L385 293z" />
          <path d="M303 322L322 346L344 343L320 362z" />
        </g>
        {creeks.filter((c) => c.w > 0).map((c, i) => <path key={i} d={c.d} transform={c.o} stroke="#fff" strokeWidth={c.w} strokeOpacity={c.w < 2 ? 0.45 : c.w < 3 ? 0.8 : 1} />)}
      </g>
    </svg>
  </div>
);

/* ---------- right dock (cut off by the window edge) ---------- */

const RightDock = () => (
  <div className="ml-[6px] flex w-[13px] shrink-0 flex-col overflow-hidden">
    <div className="mt-[3px] flex h-[18px] items-center pl-1 whitespace-nowrap">Caja</div>
    <Sm className="mt-[5px] ml-2">
      <circle cx="8" cy="8" r="4.500" stroke="#d5282c" strokeWidth="3" />
      <path d="M8 1v14M1 8h14M3 3l10 10M13 3L3 13" stroke="#d5282c" strokeWidth="2" />
      <circle cx="8" cy="8" r="2" fill="#f0f0f0" />
    </Sm>
    <div className="mt-[9px] flex h-[21px] w-[80px] shrink-0 items-center rounded-[2px] border border-[#a9a9a9] bg-white pl-2">
      <svg viewBox="0 0 12 12" className="h-3 w-3 shrink-0" fill="none" stroke="#777"><circle cx="5" cy="5" r="4.200" /><path d="M8 8l3.500 3.500" /></svg>
    </div>
    <div className="mt-px flex w-[80px] flex-1 flex-col overflow-hidden border border-[#a9a9a9] bg-white">
      {Array.from({ length: 26 }, (_, i) => (
        <div key={i} className="flex h-[18px] shrink-0 items-center pl-2">
          <svg viewBox="0 0 5 8" className="h-2 w-[5px]"><path d="M0 0v8l5-4z" fill="#555" /></svg>
        </div>
      ))}
    </div>
  </div>
);

/* ---------- status bar ---------- */

const Field = ({ className = "", children }: P) => (
  <div className={"flex h-[22px] shrink-0 items-center rounded-[2px] border border-[#a9a9a9] bg-white pt-[2px] whitespace-nowrap " + className}>{children}</div>
);

const StatusBar = () => (
  <div className="h-[15px] shrink-0 overflow-hidden">
    <div className="flex h-[30px] items-center tracking-[-0.5px] whitespace-nowrap">
      <Field className="ml-[2px] w-[253px] pl-2 text-[#777]">
        <svg viewBox="0 0 12 12" className="h-3 w-3 shrink-0" fill="none" stroke="#777"><circle cx="6" cy="5" r="4.200" /><path d="M3 8L.5 11.500" /></svg>
        <span className="ml-[7px] tracking-[-0.65px]">Escriba para localizar (Ctrl+K)</span>
      </Field>
      <span className="mt-[2px] ml-[257px] w-[63px] shrink-0 tracking-[-0.75px]">Coordenada</span>
      <Field className="w-[97px] pl-[5px] tracking-[-0.65px]">618060,9647254</Field>
      <Sm className="ml-[5px]">
        <path d="M3 2l9 9M7 1.500l6 8M10 7l5-5" stroke="#333" strokeWidth="1.500" />
        <ellipse cx="5.500" cy="5.500" rx="3" ry="4.500" stroke="#333" strokeWidth="1.500" />
      </Sm>
      <span className="mt-[2px] ml-[11px] w-[34px] shrink-0 tracking-[-0.7px]">Escala</span>
      <Field className="w-[81px] pl-[3px]">
        <span className="flex-1">1:132800</span>
        <div className="-mt-[2px] flex h-[20px] w-5 items-center justify-center border-l border-[#b5b5b5]"><Drop /></div>
      </Field>
      <svg viewBox="0 0 12 16" className="ml-[12px] h-4 w-3 shrink-0" fill="none" stroke="#888"><path d="M3 8V5a3 3 0 0 1 6 0v3" strokeWidth="1.800" /><rect x="1.500" y="7.500" width="9" height="7" fill="#ccc" /></svg>
      <span className="mt-[2px] ml-[9px] w-[62px] shrink-0 tracking-[-0.75px]">Amplificador</span>
      <Field className="w-[83px] pl-1">
        <span className="flex-1">100%</span>
        <div className="-mt-[2px] flex h-[20px] w-[14px] flex-col items-center border-l border-[#b5b5b5] pt-1"><Drop className="rotate-180" /><Drop className="mt-1" /></div>
      </Field>
      <span className="mt-[2px] ml-[8px] w-[52px] shrink-0">Rotación</span>
      <Field className="w-[60px] pl-1 tracking-normal">0,0 °</Field>
    </div>
  </div>
);

export default function App() {
  return (
    <div className="flex h-[638px] w-[1080px] flex-col overflow-hidden bg-[#f0f0f0] font-['Open_Sans','Noto_Sans',sans-serif] text-[12px] leading-[16px] tracking-[-0.3px] text-black">
      <div className="flex h-[5px] shrink-0 items-start border-b border-[#adadad]">
        <div className="ml-[226px] h-px w-[30px] bg-[#8f8f96]" />
        <div className="ml-[580px] h-px w-[30px] bg-[#8f8f96]" />
      </div>
      <ToolbarTop />
      <ToolbarBottom />
      <div className="flex h-[541px] shrink-0">
        <SideBar />
        <Dock />
        <MapCanvas />
        <RightDock />
      </div>
      <StatusBar />
    </div>
  );
}
